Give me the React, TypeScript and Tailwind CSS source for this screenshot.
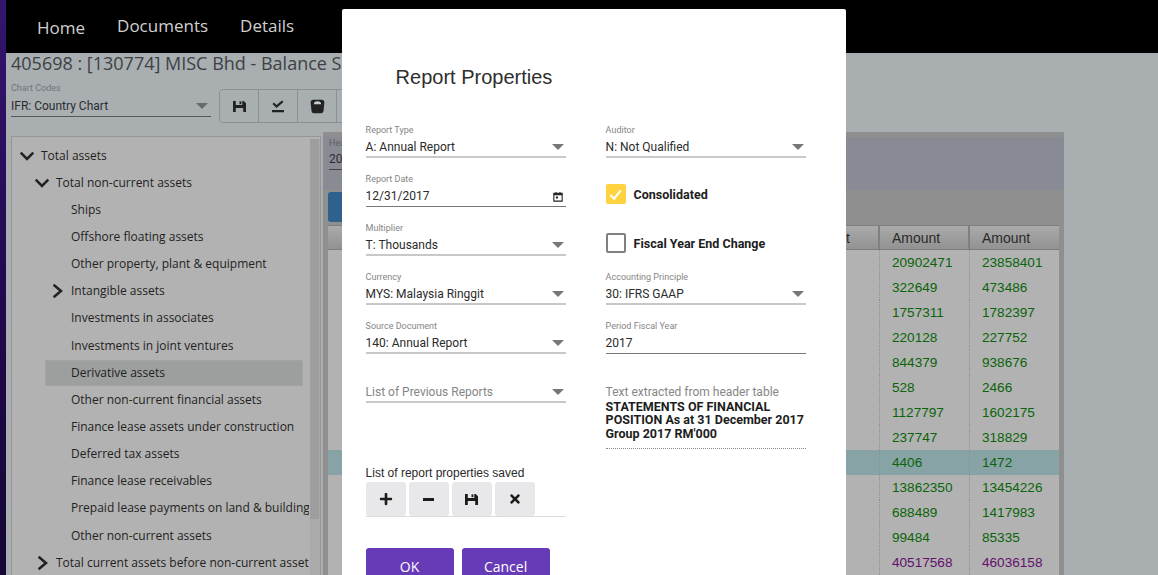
import { ReactNode } from "react";
import { FaPlus, FaTimes } from "react-icons/fa";

const sans = "font-['Open_Sans',sans-serif]";
const roboto = "font-['Roboto',sans-serif]";
const helv = "font-['Liberation_Sans',sans-serif]";

type TreeRow = { label: string; level: number; arrow?: "down" | "right"; selected?: boolean };

const treeRows: TreeRow[] = [
  { label: "Total assets", level: 0, arrow: "down" },
  { label: "Total non-current assets", level: 1, arrow: "down" },
  { label: "Ships", level: 2 },
  { label: "Offshore floating assets", level: 2 },
  { label: "Other property, plant & equipment", level: 2 },
  { label: "Intangible assets", level: 2, arrow: "right" },
  { label: "Investments in associates", level: 2 },
  { label: "Investments in joint ventures", level: 2 },
  { label: "Derivative assets", level: 2, selected: true },
  { label: "Other non-current financial assets", level: 2 },
  { label: "Finance lease assets under construction", level: 2 },
  { label: "Deferred tax assets", level: 2 },
  { label: "Finance lease receivables", level: 2 },
  { label: "Prepaid lease payments on land & buildings", level: 2 },
  { label: "Other non-current assets", level: 2 },
  { label: "Total current assets before non-current assets", level: 1, arrow: "right" },
];

const amounts: [string, string, string?][] = [
  ["20902471", "23858401"],
  ["322649", "473486"],
  ["1757311", "1782397"],
  ["220128", "227752"],
  ["844379", "938676"],
  ["528", "2466"],
  ["1127797", "1602175"],
  ["237747", "318829"],
  ["4406", "1472", "hl"],
  ["13862350", "13454226"],
  ["688489", "1417983"],
  ["99484", "85335"],
  ["40517568", "46036158", "total"],
];

function Chevron({ dir, className }: { dir: "down" | "right"; className?: string }) {
  return (
    <svg viewBox="0 0 14 14" className={className} fill="none" stroke="#222" strokeWidth="2.2">
      {dir === "down" ? <path d="M1.5 4 7 9.5 12.5 4" /> : <path d="M4 1.5 10.5 7 4 12.5" />}
    </svg>
  );
}

function Caret({ color = "#666" }: { color?: string }) {
  return (
    <svg viewBox="0 0 12 6" className="h-[6px] w-[12px]">
      <path d="M0 0h12L6 6z" fill={color} />
    </svg>
  );
}

function Floppy({ className }: { className?: string }) {
  return (
    <svg viewBox="0 0 14 14" className={className} fill="currentColor">
      <path d="M0 1h3v4.5h7V1h1.5L14 3.5V13h-3V8.5H3V13H0z" />
      <path d="M7 1.5h2v3H7z" />
    </svg>
  );
}

function Field({
  label,
  value,
  select,
  date,
  muted,
}: {
  label: string;
  value: string;
  select?: boolean;
  date?: boolean;
  muted?: boolean;
}) {
  return (
    <div className={`h-[49px] w-[200px] ${roboto}`}>
      <div className="h-[13px] text-[9px] leading-[13px] text-[#858585]">{label}</div>
      <div
        className={`flex h-[21px] items-center justify-between pr-[2px] text-[12px] ${
          muted ? "text-[#858585]" : "text-[#2b2b2b]"
        } ${select ? "border-b-2 border-[#c8c8c8]" : "border-b border-[#777]"}`}
      >
        <span>{value}</span>
        {select && <Caret color="#777" />}
        {date && (
          <svg viewBox="0 0 12 12" className="mr-[1px] h-[11px] w-[10px]">
            <path d="M1 2h10v9.5H1z" fill="none" stroke="#222" strokeWidth="1.3" />
            <path d="M1 2h10v2.5H1zM3 0.5h1.3V2H3zM7.7 0.5H9V2H7.7zM3.5 6h2.5v2.5H3.5z" fill="#222" />
          </svg>
        )}
      </div>
    </div>
  );
}

function Check({ checked, label }: { checked?: boolean; label: string }) {
  return (
    <div className={`flex h-[49px] w-[200px] items-start gap-[8px] pt-[11px] ${roboto}`}>
      {checked ? (
        <span className="flex h-[20px] w-[20px] items-center justify-center rounded-[2px] bg-[#ffd340]">
          <svg viewBox="0 0 16 16" className="h-[15px] w-[15px]" fill="none" stroke="#fff" strokeWidth="2.2">
            <path d="M2.5 8.5 6.5 12.5 13.5 3.5" />
          </svg>
        </span>
      ) : (
        <span className="h-[20px] w-[20px] rounded-[2px] border-2 border-[#808080]" />
      )}
      <span className="text-[12.5px] leading-[22px] font-bold text-[#212121]">{label}</span>
    </div>
  );
}

function SquareButton({ children }: { children: ReactNode }) {
  return (
    <button className="flex h-[34px] w-[40px] items-center justify-center rounded-[3px] bg-[#e8e8ea] text-[14px] text-[#1c1c1c]">
      {children}
    </button>
  );
}

function ToolButton({ children }: { children: ReactNode }) {
  return <div className="flex h-full w-[39px] items-center justify-center border-r border-[#8c9093]">{children}</div>;
}

export default function App() {
  return (
    <div className="relative flex h-[575px] w-[1158px] overflow-hidden bg-[#a9aeb1]">
      <div className="w-[6px] shrink-0 bg-gradient-to-b from-[#34166f] via-[#21094f] to-[#150633]" />
      <div className="flex min-w-0 flex-1 flex-col">
        <nav className={`flex h-[53px] shrink-0 bg-black text-[#d0d0d0] ${sans}`}>
          <span className="mt-[16px] ml-[31px] text-[17px] leading-6">Home</span>
          <span className="mt-[14px] ml-[32px] text-[17px] leading-6">Documents</span>
          <span className="mt-[14px] ml-[32px] text-[17px] leading-6">Details</span>
        </nav>

        <div className="pl-[5px]">
          <h1 className={`h-[24px] whitespace-nowrap text-[18px] leading-[21px] text-[#3d4144] ${sans}`}>
            405698 : [130774] MISC Bhd - Balance Sheet
          </h1>

          <div className="mt-[5px] flex h-[47px] items-start">
            <div className={`w-[200px] ${roboto}`}>
              <div className="h-[14px] text-[9px] leading-[13px] text-[#70757a]">Chart Codes</div>
              <div className="flex h-[21px] items-center justify-between border-b border-[#55595c] pr-[3px] text-[12px] text-[#2a2d30]">
                <span>IFR: Country Chart</span>
                <Caret color="#666a6d" />
              </div>
            </div>
            <div className="mt-[7px] ml-[8px] flex h-[34px] rounded-[4px] border border-[#8c9093]">
              <ToolButton>
                <Floppy className="h-[13px] w-[13px] text-[#222]" />
              </ToolButton>
              <ToolButton>
                <svg viewBox="0 0 14 14" className="h-[14px] w-[14px]" fill="#222">
                  <path d="M1.5 5 3 3.6 5.5 6 11 1.5 12.5 3 5.5 9zM1 11h12v2.2H1z" />
                </svg>
              </ToolButton>
              <ToolButton>
                <svg viewBox="0 0 14 14" className="h-[15px] w-[15px]">
                  <path d="M3 .8h8a2.4 2.4 0 0 1 2.4 2.4l-.8 8a2.4 2.4 0 0 1-2.4 2.2H3.8a2.4 2.4 0 0 1-2.4-2.2l-.8-8A2.4 2.4 0 0 1 3 .8z" fill="#222" />
                  <path d="M3.6 5a3.4 3 0 0 1 6.8 0z" fill="#ccc" />
                </svg>
              </ToolButton>
              <ToolButton>
                <span />
              </ToolButton>
            </div>
          </div>

          <div className="mt-[3px] flex items-start gap-[2px]">
            <div className="relative mt-[4px] h-[440px] w-[310px] shrink-0 border border-[#969696] bg-[#b2b2b2]">
              <div className={`h-full w-[297px] overflow-hidden pt-[5px] text-[12px] text-[#222] ${sans}`}>
                {treeRows.map((row) => (
                  <div
                    key={row.label}
                    className={`flex h-[27.15px] items-center whitespace-nowrap ${
                      row.level === 0 ? "pl-[9px]" : row.level === 1 ? "pl-[24px]" : "pl-[33px]"
                    }`}
                  >
                    <span
                      className={`relative flex h-[26px] items-center ${
                        row.selected ? "w-[258px] border border-[#a3a3a3] bg-[#9d9f9f]" : "flex-1 border border-transparent"
                      } ${row.level === 2 ? "pl-[25px]" : ""}`}
                    >
                      {row.arrow && (
                        <Chevron
                          dir={row.arrow}
                          className={`absolute top-[4px] h-[16px] w-[16px] ${row.level === 2 ? "left-[3px]" : "-left-[3px]"}`}
                        />
                      )}
                      <span className={row.level < 2 ? "pl-[19px]" : ""}>{row.label}</span>
                    </span>
                  </div>
                ))}
              </div>
              <div className="absolute top-[2px] right-0 bottom-0 w-[10px] bg-[#aaaaaa]">
                <div className="h-[380px] w-[9px] bg-[#9e9e9e]" />
              </div>
            </div>

            <div className="flex h-[445px] w-[741px] shrink-0 flex-col bg-[#8f8f8f] pt-[5px]">
              <div className="h-[53px] rounded-r-[4px] bg-[#888a94] pl-[6px]">
                <div className={`text-[9px] leading-[13px] text-[#5d6066] ${roboto}`}>Header</div>
                <div className={`w-[100px] border-b border-[#444] text-[12px] leading-[19px] text-[#2a2d30] ${roboto}`}>2017</div>
              </div>
              <div className="pt-[2px] pl-[5px]">
                <div className="h-[30px] w-[60px] rounded-[3px] bg-[#2f618f]" />
              </div>
              <div className="mt-[3px] pr-[5px] pl-[5px]">
                <div className={`flex h-[25px] border-y border-[#7d7d7d] bg-gradient-to-b from-[#aaaaaa] to-[#929292] text-[14px] text-[#2a2a2a] ${helv}`}>
                  <div className="w-[552px] shrink-0 border-r-2 border-[#808080] pr-[28px] text-right leading-[24px]">Amount</div>
                  <div className="w-[90px] shrink-0 border-r-2 border-[#808080] pl-[12px] leading-[24px]">Amount</div>
                  <div className="w-[89px] shrink-0 pl-[12px] leading-[24px]">Amount</div>
                </div>
                <div className={`bg-[#b2b2b2] text-[13.6px] text-[#0a640a] ${helv}`}>
                  {amounts.map(([a, b, kind]) => (
                    <div key={a} className={`flex h-[25px] items-center ${kind === "hl" ? "bg-[#88a3a5]" : ""} ${kind === "total" ? "text-[#65106e]" : ""}`}>
                      <div className="h-full w-[552px] shrink-0 border-r border-dotted border-[#8f8f8f]" />
                      <div className="flex h-full w-[90px] shrink-0 items-center border-r border-dotted border-[#8f8f8f] pt-[2px] pl-[12px]">{a}</div>
                      <div className="flex h-full w-[89px] shrink-0 items-center pt-[2px] pl-[12px]">{b}</div>
                    </div>
                  ))}
                </div>
              </div>
            </div>
          </div>
        </div>
      </div>

      {/* modal sits over the dimmed page */}
      <div className="absolute top-[9px] left-[342px] h-[600px] w-[504px] rounded-t-[2px] bg-white pl-[23.6px]">
        <h2 className={`pt-[56px] pl-[30px] text-[20px] leading-[24px] text-[#2e2e2e] ${helv}`}>Report Properties</h2>
        <div className="mt-[35px] flex gap-[40px]">
          <div className="w-[200px]">
            <Field label="Report Type" value="A: Annual Report" select />
            <Field label="Report Date" value="12/31/2017" date />
            <Field label="Multiplier" value="T: Thousands" select />
            <Field label="Currency" value="MYS: Malaysia Ringgit" select />
            <Field label="Source Document" value="140: Annual Report" select />
            <Field label="" value="List of Previous Reports" select muted />
            <div className={`mt-[48px] text-[12px] leading-[14px] text-[#2a2a2a] ${helv}`}>List of report properties saved</div>
            <div className="mt-[2px] flex gap-[3px] border-b border-[#dcdcdc]">
              <SquareButton><FaPlus /></SquareButton>
              <SquareButton>
                <span className="h-[3px] w-[11px] bg-[#1c1c1c]" />
              </SquareButton>
              <SquareButton><Floppy className="h-[13px] w-[13px]" /></SquareButton>
              <SquareButton><FaTimes /></SquareButton>
            </div>
            <div className={`mt-[31px] flex gap-[8px] text-[14px] text-white ${sans}`}>
              <button className="h-[36px] w-[88px] rounded-[3px] bg-[#673ab7]">OK</button>
              <button className="h-[36px] w-[88px] rounded-[3px] bg-[#673ab7]">Cancel</button>
            </div>
          </div>
          <div className="w-[200px]">
            <Field label="Auditor" value="N: Not Qualified" select />
            <Check checked label="Consolidated" />
            <Check label="Fiscal Year End Change" />
            <Field label="Accounting Principle" value="30: IFRS GAAP" select />
            <Field label="Period Fiscal Year" value="2017" />
            <div className={`h-[80px] w-[200px] border-b border-dotted border-[#888] pt-[17px] text-[12px] leading-[13.5px] ${roboto}`}>
              <div className="text-[#858585]">Text extracted from header table</div>
              <div className="text-[12.5px] font-bold text-[#1d1d1d]">STATEMENTS OF FINANCIAL POSITION As at 31 December 2017 Group 2017 RM'000</div>
            </div>
          </div>
        </div>
      </div>
    </div>
  );
}
